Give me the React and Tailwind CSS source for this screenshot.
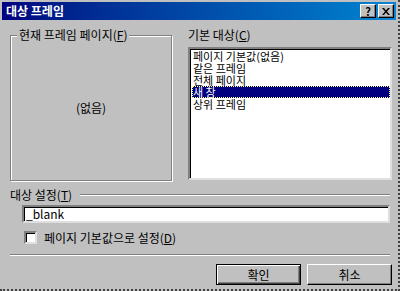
import React from 'react';

const font = { fontFamily: '"Noto Sans CJK KR", "Noto Sans", sans-serif' };

const items = ['페이지 기본값(없음)', '같은 프레임', '전체 페이지', '새 창', '상위 프레임'];

function TitleButton({ children }) {
  return (
    <div className="w-[16px] h-[14px] bg-[#c0c0c0] border border-t-white border-l-white border-r-black border-b-black shadow-[inset_-1px_-1px_0_#808080] flex items-center justify-center text-black">
      {children}
    </div>
  );
}

function Button({ children, isDefault }) {
  return (
    <div
      className={`h-[21px] w-[85px] bg-[#c0c0c0] flex items-center justify-center text-[12px] text-black ${
        isDefault
          ? 'border border-black shadow-[inset_1px_1px_0_#fff,inset_-1px_-1px_0_#404040,inset_-2px_-2px_0_#808080]'
          : 'border border-t-white border-l-white border-r-black border-b-black shadow-[inset_-1px_-1px_0_#808080]'
      }`}
    >
      {children}
    </div>
  );
}

export default function App() {
  return (
    <div
      className="w-[400px] h-[291px] bg-[#c0c0c0] flex flex-col pt-[2px] pl-[2px] border-r-2 border-b-2 border-dotted border-[#404040] overflow-hidden"
      style={font}
    >
      {/* Title bar */}
      <div className="h-[18px] w-[394px] bg-gradient-to-r from-[#000080] to-[#1084d0] flex items-center justify-between pl-[4px] pr-[2px]">
        <span className="text-white text-[12px] font-bold leading-none">대상 프레임</span>
        <div className="flex gap-[2px]">
          <TitleButton>
            <span className="text-[11px] font-bold leading-none">?</span>
          </TitleButton>
          <TitleButton>
            <svg width="8" height="7" viewBox="0 0 8 7">
              <path d="M0 0h2l2 2.5L6 0h2L5 3.5 8 7H6L4 4.5 2 7H0l3-3.5z" fill="#000" />
            </svg>
          </TitleButton>
        </div>
      </div>

      <div className="flex flex-col pl-[8px] pr-[6px] text-[12px] text-black">
        {/* Top row */}
        <div className="flex mt-[7px] gap-[16px]">
          <div className="relative mt-[8px] w-[162px] h-[146px] border border-[#808080] shadow-[inset_1px_1px_0_#fff,1px_1px_0_#fff] flex items-center justify-center">
            <span className="absolute -top-[9px] left-[6px] bg-[#c0c0c0] px-[2px] leading-[16px]">
              현재 프레임 페이지(<u>F</u>)
            </span>
            <span>(없음)</span>
          </div>
          <div className="flex flex-col w-[204px]">
            <span className="leading-[16px] h-[20px]">
              기본 대상(<u>C</u>)
            </span>
            <div className="h-[133px] bg-white border-2 border-t-[#808080] border-l-[#808080] border-r-[#dfdfdf] border-b-[#dfdfdf] shadow-[inset_1px_1px_0_#000] pt-[1px] pl-[2px] text-[11px]">
              {items.map((it) => (
                <div
                  key={it}
                  className={`h-[12px] leading-[12px] pl-[1px] whitespace-nowrap ${
                    it === '새 창' ? 'bg-[#000080] text-white outline outline-1 outline-dotted outline-[#ffff80] -outline-offset-1' : ''
                  }`}
                >
                  {it}
                </div>
              ))}
            </div>
          </div>
        </div>

        {/* Target setting */}
        <div className="flex items-center mt-[6px] h-[16px]">
          <span className="leading-[16px]">
            대상 설정(<u>T</u>)
          </span>
          <div className="flex-1 ml-[8px] mr-[2px] h-[2px] border-t border-[#808080] border-b border-b-white" />
        </div>

        <div className="ml-[12px] mt-[2px] w-[368px] h-[18px] bg-white border-2 border-t-[#808080] border-l-[#808080] border-r-[#dfdfdf] border-b-[#dfdfdf] shadow-[inset_1px_1px_0_#000] flex items-center pl-[2px] leading-none">
          _blank
        </div>

        <div className="flex items-center ml-[14px] mt-[8px] h-[13px] gap-[7px]">
          <div className="w-[13px] h-[13px] bg-white border-2 border-t-[#808080] border-l-[#808080] border-r-[#dfdfdf] border-b-[#dfdfdf] shadow-[inset_1px_1px_0_#000]" />
          <span className="leading-none">
            페이지 기본값으로 설정(<u>D</u>)
          </span>
        </div>

        <div className="mt-[10px] mr-[2px] h-[2px] border-t border-[#808080] border-b border-b-white" />

        <div className="flex justify-end gap-[6px] mt-[8px] mr-[0px]">
          <Button isDefault>확인</Button>
          <Button>취소</Button>
        </div>
      </div>
    </div>
  );
}
